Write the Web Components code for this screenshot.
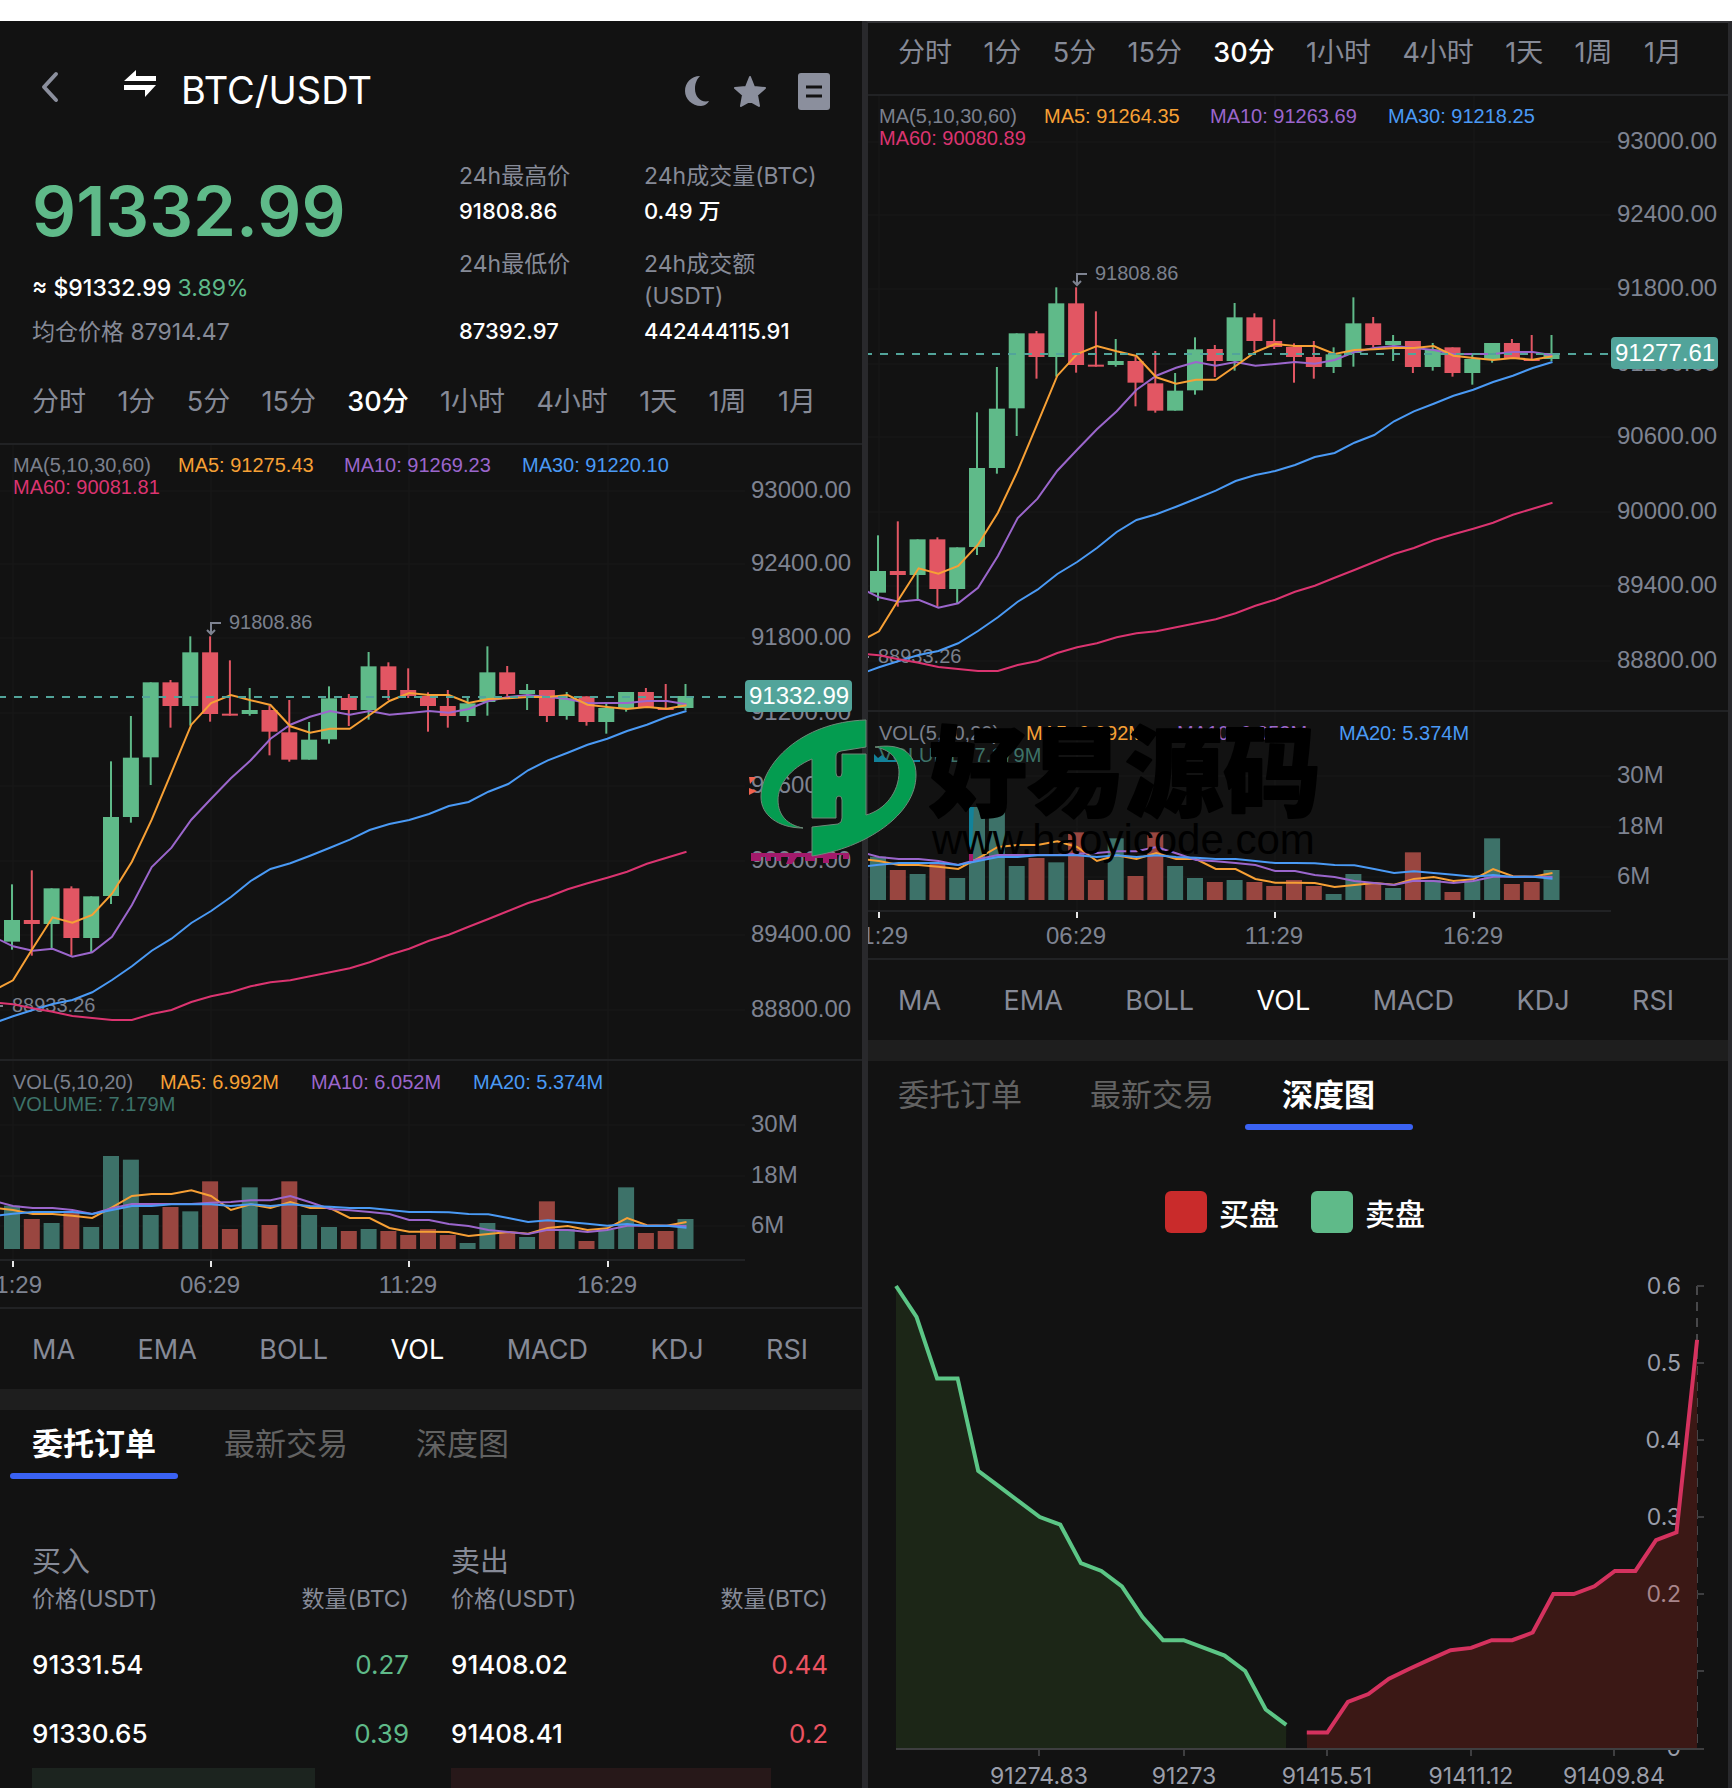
<!DOCTYPE html>
<html lang="zh-CN">
<head>
<meta charset="utf-8">
<meta name="viewport" content="width=device-width, initial-scale=1">
<title>BTC/USDT</title>
<style>
  body {
    margin: 0;
    background: #ffffff;
    font-family: Inter, 'Noto Sans CJK SC', sans-serif;
  }
</style>
</head>
<body>
<trade-board>
  <market-panel side="left">
    <pair-header pair="BTC/USDT"></pair-header>
    <ticker-summary></ticker-summary>
    <option-bar kind="interval" active="30分" items="分时,1分,5分,15分,30分,1小时,4小时,1天,1周,1月"></option-bar>
    <kline-chart price="91332.99" ma="91275.43,91269.23,91220.10,90081.81"></kline-chart>
    <option-bar kind="indicator" active="VOL" items="MA,EMA,BOLL,VOL,MACD,KDJ,RSI"></option-bar>
    <section-tabs active="0"></section-tabs>
    <order-book></order-book>
  </market-panel>
  <market-panel side="right">
    <option-bar kind="interval" active="30分" items="分时,1分,5分,15分,30分,1小时,4小时,1天,1周,1月"></option-bar>
    <kline-chart price="91277.61" ma="91264.35,91263.69,91218.25,90080.89"></kline-chart>
    <option-bar kind="indicator" active="VOL" items="MA,EMA,BOLL,VOL,MACD,KDJ,RSI"></option-bar>
    <section-tabs active="2"></section-tabs>
    <depth-chart></depth-chart>
  </market-panel>
  <brand-mark slot="mark"></brand-mark>
</trade-board>

<script>
const GREEN = '#5fba89';
const RED = '#e25663';
const MUTED = '#868a97';

// Attach an open root and fill it
function mount(el, html) {
  el.attachShadow({ mode: 'open' }).innerHTML = html;
}

// --- Board: two panels side by side ---
class TradeBoard extends HTMLElement {
  constructor() {
    super();
    mount(this, `
      <style>
        :host { display: block; position: relative; padding-top: 21px; overflow: hidden; }
        main { display: grid; grid-template-columns: 1fr 1fr; }
      </style>
      <main><slot></slot></main>
      <slot name="mark"></slot>`);
  }
}
customElements.define('trade-board', TradeBoard);

class MarketPanel extends HTMLElement {
  constructor() {
    super();
    mount(this, `
      <style>
        :host {
          --pad-start: 32px;
          --bar-top: 33px;
          display: flex;
          flex-direction: column;
          min-width: 0;
          background: #121212;
          border-right: 4px solid #29292c;
        }
        :host([side="right"]) {
          --pad-start: 30px;
          --bar-top: 11px;
          border-left: 2px solid #29292c;
          border-top: 2px solid #333336;
        }
      </style>
      <slot></slot>`);
  }
}
customElements.define('market-panel', MarketPanel);

// --- Header ---
class PairHeader extends HTMLElement {
  connectedCallback() {
    mount(this, `
      <style>
        :host { display: block; }
        header { display: flex; align-items: center; height: 138px; padding: 0 32px 0 34px; }
        button { border: 0; padding: 0; background: none; color: #8b8f9d; cursor: pointer; }
        svg { display: block; }
        .back { margin-right: 58px; }
        .swap { margin-right: 25px; color: #fff; }
        h1 { flex: 1; margin: 0; font-size: 38px; line-height: 44px; font-weight: 400; color: #fff; }
        .star { margin: 0 32px 0 21px; }
      </style>
      <header>
        <button class="back" aria-label="返回">
          <svg width="32" height="44" viewBox="0 0 32 44" fill="none" stroke="currentColor" stroke-width="4" stroke-linecap="round" stroke-linejoin="round"><path d="M22 6 10 19l12 13"/></svg>
        </button>
        <button class="swap" aria-label="切换交易对">
          <svg width="32" height="44" viewBox="0 0 32 44" fill="currentColor"><path d="M0 13 12 2v6h20v5zM0 17h32L21 29v-7H0z"/></svg>
        </button>
        <h1>${this.getAttribute('pair')}</h1>
        <button aria-label="夜间模式">
          <svg width="32" height="40" viewBox="0 0 32 40" fill="currentColor"><path d="M19 6C10 6 4 13 4 21s7 15 16 15c4 0 7-3 8-5-8 2-14-4-14-12 0-6 2-10 5-13z"/></svg>
        </button>
        <button class="star" aria-label="收藏">
          <svg width="32" height="40" viewBox="0 0 32 40" fill="currentColor" stroke="currentColor" stroke-width="2" stroke-linejoin="round"><path d="m16 7 4 10 11 1-8 7 2 11-9-5-9 5 2-11-8-7 11-1z"/></svg>
        </button>
        <button aria-label="订单">
          <svg width="32" height="42" viewBox="0 -4 32 42"><rect width="32" height="37" rx="3" fill="currentColor"/><path d="M8 14h16M8 23h16" stroke="#121212" stroke-width="3"/></svg>
        </button>
      </header>`);
  }
}
customElements.define('pair-header', PairHeader);

// --- Last price and 24h figures ---
class TickerSummary extends HTMLElement {
  constructor() {
    super();
    mount(this, `
      <style>
        :host {
          display: grid;
          grid-template-columns: 427px 1fr;
          padding-left: 32px;
          font-size: 23px;
          line-height: 32px;
          color: ${MUTED};
        }
        .last { font-size: 69px; line-height: 84px; font-weight: 600; color: ${GREEN}; padding-top: 10px; }
        .usd { margin-top: 19px; color: #fff; }
        .usd b { font-weight: 500; }
        .usd span { color: ${GREEN}; }
        .avg { margin-top: 12px; }
        dl { display: grid; grid-template-columns: 185px 1fr; row-gap: 18px; margin: 1px 0 0; }
        dl div { display: flex; flex-direction: column; justify-content: space-between; }
        dd { margin: 0; font-size: 22px; line-height: 38px; color: #fff; font-weight: 500; }
      </style>
      <div>
        <div class="last">91332.99</div>
        <div class="usd"><b>≈ $91332.99</b> <span>3.89%</span></div>
        <div class="avg">均仓价格 87914.47</div>
      </div>
      <dl>
        <div><dt>24h最高价</dt><dd>91808.86</dd></div>
        <div><dt>24h成交量(BTC)</dt><dd>0.49 万</dd></div>
        <div><dt>24h最低价</dt><dd>87392.97</dd></div>
        <div><dt>24h成交额<br>(USDT)</dt><dd>442444115.91</dd></div>
      </dl>`);
  }
}
customElements.define('ticker-summary', TickerSummary);

// --- Row of text options, used for intervals and indicators ---
class OptionBar extends HTMLElement {
  connectedCallback() {
    const active = this.getAttribute('active');
    const buttons = this.getAttribute('items').split(',').map(name =>
      `<button aria-pressed="${name === active}">${name}</button>`).join('');
    mount(this, `
      <style>
        :host { display: block; }
        nav { display: flex; justify-content: space-between; padding: var(--bar-top) 46px 22px var(--pad-start); }
        button {
          border: 0;
          padding: 0;
          background: none;
          font: 400 27px/38px Inter, 'Noto Sans CJK SC', sans-serif;
          color: ${MUTED};
          white-space: nowrap;
          cursor: pointer;
        }
        button[aria-pressed="true"] { color: #fff; font-weight: 500; }
        :host([kind="indicator"]) nav { padding: 22px 54px 20px var(--pad-start); border-bottom: 21px solid #1e1e1e; }
        :host([kind="indicator"]) button { font-weight: 400; }
      </style>
      <nav>${buttons}</nav>`);
  }
}
customElements.define('option-bar', OptionBar);

// --- Candles, moving averages and volume ---
// Rows: rising, high, low, body top, body bottom (thirds of a unit below PANE_Y)
const CANDLES = [
  [1, 826, 1022, 933, 998], [0, 784, 1040, 933, 945], [1, 838, 1018, 838, 945], [0, 832, 1040, 838, 987],
  [1, 862, 1030, 862, 987], [1, 457, 885, 624, 861], [1, 321, 641, 446, 624], [1, 220, 528, 220, 445],
  [0, 213, 356, 220, 291], [1, 82, 350, 130, 291], [0, 82, 338, 130, 315], [0, 154, 320, 314, 320],
  [1, 237, 320, 303, 315], [0, 290, 439, 303, 368], [0, 273, 458, 370, 452], [1, 339, 452, 392, 452],
  [1, 232, 404, 268, 391], [0, 255, 351, 267, 303], [1, 129, 332, 172, 303], [0, 160, 273, 172, 243],
  [0, 178, 267, 243, 261], [0, 250, 368, 261, 291], [0, 243, 356, 291, 321], [1, 262, 339, 283, 321],
  [1, 112, 320, 190, 279], [0, 171, 262, 190, 255], [1, 225, 303, 243, 255], [0, 243, 339, 243, 321],
  [1, 249, 332, 268, 321], [0, 262, 350, 262, 339], [1, 285, 374, 297, 339], [1, 249, 308, 249, 297],
  [0, 237, 297, 249, 297], [0, 225, 302, 297, 303], [1, 225, 303, 261, 297],
];
const PRICE_LINES = {
  '#9b66cc': [983, 1012, 1025, 1019, 1043, 1030, 983, 888, 774, 716, 632, 569, 508, 454, 389, 347, 323, 306, 317, 306, 317, 312, 306, 311, 300, 276, 264, 258, 264, 270, 283, 282, 282, 276, 276, 286],
  '#f7a035': [1145, 1114, 1018, 925, 941, 918, 854, 758, 632, 490, 347, 282, 258, 274, 288, 352, 371, 359, 359, 318, 276, 252, 258, 258, 282, 270, 268, 264, 264, 258, 287, 294, 300, 294, 299, 289],
  '#4a9af5': [1243, 1222, 1203, 1185, 1173, 1150, 1113, 1072, 1025, 989, 942, 906, 864, 816, 780, 763, 740, 716, 692, 663, 645, 633, 615, 591, 579, 548, 525, 484, 454, 431, 407, 389, 366, 347, 324, 306],
  '#db3470': [1180, 1186, 1198, 1208, 1221, 1227, 1233, 1233, 1215, 1203, 1179, 1162, 1150, 1132, 1120, 1114, 1102, 1090, 1078, 1060, 1037, 1019, 995, 977, 953, 930, 906, 882, 864, 841, 823, 806, 788, 764, 746, 728],
};
const VOLUMES = [440, 480, 492, 462, 504, 291, 302, 468, 444, 457, 367, 510, 385, 498, 367, 468, 504, 516, 510, 516, 528, 510, 528, 552, 492, 522, 534, 427, 510, 546, 512, 385, 522, 516, 480];
const VOLUME_LINES = {
  '#f7a035': [446, 453, 465, 465, 470, 477, 445, 411, 405, 405, 394, 411, 453, 436, 447, 429, 447, 447, 477, 477, 507, 518, 518, 519, 531, 525, 519, 524, 507, 501, 513, 508, 477, 499, 500, 489],
  '#9b66cc': [425, 441, 447, 447, 453, 465, 448, 435, 435, 435, 435, 431, 429, 424, 424, 411, 430, 450, 454, 459, 465, 483, 483, 495, 501, 513, 519, 525, 512, 513, 519, 513, 500, 500, 500, 501],
  '#4a9af5': [471, 464, 459, 459, 459, 465, 453, 441, 441, 436, 436, 436, 441, 436, 441, 436, 441, 443, 447, 447, 453, 459, 459, 460, 465, 466, 477, 489, 484, 489, 494, 500, 495, 501, 500, 506],
};
const PANE_Y = 166;
const VOL_Y = 616;
const STEP = 19.81;
const X0 = 12;

function polylines(lines, top) {
  return Object.entries(lines).map(([color, values]) => {
    const pts = values.map((v, i) => `${(X0 + 1 + (i - 1) * STEP).toFixed(1)},${(top + v / 3).toFixed(1)}`).join(' ');
    return `<polyline points="${pts}" fill="none" stroke="${color}" stroke-width="2"/>`;
  }).join('');
}

class KlineChart extends HTMLElement {
  connectedCallback() {
    const price = this.getAttribute('price');
    const ma = this.getAttribute('ma').split(',');
    const right = this.parentElement.getAttribute('side') === 'right';
    const priceY = right ? 260 : 254;

    const candles = CANDLES.map(([up, high, low, top, bottom], i) => {
      if (right && i === 34) top = 279;
      const x = X0 + i * STEP;
      const y = v => PANE_Y + v / 3;
      return `<g fill="${up ? GREEN : RED}">
        <rect x="${(x - 1).toFixed(1)}" y="${y(high)}" width="2" height="${(low - high) / 3}"/>
        <rect x="${(x - 8).toFixed(1)}" y="${y(top)}" width="16" height="${Math.max(2, (bottom - top) / 3)}"/></g>`;
    }).join('');

    const bars = VOLUMES.map((v, i) =>
      `<rect x="${(X0 - 8 + i * STEP).toFixed(1)}" y="${VOL_Y + v / 3}" width="16" height="${(570 - v) / 3}" fill="${CANDLES[i][0] ? '#3d7269' : '#994640'}"/>`).join('');

    const scale = [['93000.00', 48], ['92400.00', 121], ['91800.00', 195], ['91200.00', 270], ['90600.00', 343],
      ['90000.00', 418], ['89400.00', 492], ['88800.00', 567], ['30M', 682], ['18M', 733], ['6M', 783]];
    const times = [['01:29', 13], ['06:29', 211], ['11:29', 409], ['16:29', 608]];

    mount(this, `
      <style>
        :host { display: block; }
        svg { display: block; width: 100%; height: auto; font-family: 'Liberation Sans', Arial, sans-serif; }
        .axis { font-size: 24px; fill: #7e8391; }
        .small { font-size: 20px; fill: #7b808d; }
        .tag { font-size: 24px; fill: #fff; }
      </style>
      <svg viewBox="${right ? '2 0 860' : '0 0 862'} 866" role="img" aria-label="K线图">
        <g stroke="#191919">
          ${scale.map(s => `<path d="M0 ${s[1]}H745"/>`).join('')}
          ${times.map(t => `<path d="M${t[1]} 0V816"/>`).join('')}
        </g>
        <path d="M0 1H866M0 617H866M0 817H745M0 865H866" stroke="#212224" stroke-width="2"/>
        <g class="axis">${scale.map(s => `<text x="751" y="${s[1] + 7}">${s[0]}</text>`).join('')}</g>
        ${candles}
        <path d="M211 190V180h10M207 187l4 4 4-4" fill="none" stroke="#7e8391" stroke-width="2"/>
        <text class="small" x="229" y="186">91808.86</text>
        <path d="M0 563h3" stroke="#7e8391" stroke-width="2"/>
        <text class="small" x="12" y="569">88933.26</text>
        ${polylines(PRICE_LINES, PANE_Y)}
        <path d="M0 ${priceY}H745" stroke="#52a49a" stroke-width="2" stroke-dasharray="8 8" stroke-dashoffset="2"/>
        <rect x="745" y="${priceY - 17}" width="107" height="32" rx="4" fill="#52a49a"/>
        <text class="tag" x="749" y="${priceY + 7}">${price}</text>
        <g class="small">
          <text x="13" y="29">MA(5,10,30,60)</text>
          <text x="178" y="29" fill="#f7a035">MA5: ${ma[0]}</text>
          <text x="344" y="29" fill="#9b66cc">MA10: ${ma[1]}</text>
          <text x="522" y="29" fill="#4a9af5">MA30: ${ma[2]}</text>
          <text x="13" y="51" fill="#db3470">MA60: ${ma[3]}</text>
          <text x="13" y="646">VOL(5,10,20)</text>
          <text x="160" y="646" fill="#f7a035">MA5: 6.992M</text>
          <text x="311" y="646" fill="#9b66cc">MA10: 6.052M</text>
          <text x="473" y="646" fill="#4a9af5">MA20: 5.374M</text>
          <text x="13" y="668" fill="#3d7269">VOLUME: 7.179M</text>
        </g>
        ${bars}
        ${polylines(VOLUME_LINES, VOL_Y)}
        ${times.map(t => `<path d="M${t[1]} 818v6" stroke="#e6e6e6" stroke-width="2"/>`).join('')}
        <g class="axis" text-anchor="middle">${times.map(t => `<text x="${t[1] - 1}" y="850">${t[0]}</text>`).join('')}</g>
      </svg>`);
  }
}
customElements.define('kline-chart', KlineChart);

// --- Section tabs ---
class SectionTabs extends HTMLElement {
  connectedCallback() {
    const active = Number(this.getAttribute('active'));
    const tabs = ['委托订单', '最新交易', '深度图'].map((name, i) =>
      `<button role="tab" aria-selected="${i === active}">${name}</button>`).join('');
    mount(this, `
      <style>
        :host { display: block; }
        div { display: flex; gap: 68px; padding: 9px var(--pad-start) 0; }
        button {
          position: relative;
          border: 0;
          padding: 0 0 14px;
          background: none;
          font: 400 31px/46px 'Noto Sans CJK SC', sans-serif;
          color: #626262;
          cursor: pointer;
        }
        button[aria-selected="true"] { color: #fff; font-weight: 700; }
        button[aria-selected="true"]::after {
          content: '';
          position: absolute;
          left: 50%;
          bottom: 0;
          width: 168px;
          height: 6px;
          margin-left: -84px;
          border-radius: 3px;
          background: #3a62f3;
        }
      </style>
      <div role="tablist">${tabs}</div>`);
  }
}
customElements.define('section-tabs', SectionTabs);

// --- Order book ---
class OrderBook extends HTMLElement {
  constructor() {
    super();
    const side = (cls, title, rows) => `
      <table class="${cls}">
        <caption>${title}</caption>
        <thead><tr><th>价格(USDT)</th><th>数量(BTC)</th></tr></thead>
        <tbody>${rows.map(r => `<tr><td>${r[0]}</td><td>${r[1]}</td></tr>`).join('')}</tbody>
        <tfoot><tr><td colspan="2"></td></tr></tfoot>
      </table>`;
    mount(this, `
      <style>
        :host { display: grid; grid-template-columns: 1fr 1fr; gap: 42px; padding: 63px 34px 0 32px; }
        table { width: 100%; border-collapse: collapse; color: #fff; }
        caption { text-align: left; font-size: 29px; line-height: 40px; color: ${MUTED}; }
        th { padding: 0 0 14px; font-size: 23px; line-height: 34px; font-weight: 400; color: ${MUTED}; text-align: left; }
        td { padding: 0; height: 69px; font-size: 26px; line-height: 36px; font-weight: 500; }
        th:last-child, td:last-child { text-align: right; }
        td:last-child { font-weight: 400; }
        .buy td:last-child { color: ${GREEN}; }
        .sell td:last-child { color: #ea5361; }
        tfoot td { height: 20px; }
        .buy tfoot td { background: linear-gradient(90deg, #1c241f 75%, transparent 75%); }
        .sell tfoot td { background: linear-gradient(90deg, #271819 85%, transparent 85%); }
      </style>
      ${side('buy', '买入', [['91331.54', '0.27'], ['91330.65', '0.39']])}
      ${side('sell', '卖出', [['91408.02', '0.44'], ['91408.41', '0.2']])}`);
  }
}
customElements.define('order-book', OrderBook);

// --- Depth chart ---
const BIDS = [.6, .56, .48, .48, .36, .34, .32, .3, .29, .24, .23, .21, .17, .14, .14, .13, .12, .1, .05, .03];
const ASKS = [.02, .02, .06, .07, .09, .103, .115, .127, .13, .14, .14, .15, .2, .2, .21, .23, .23, .27, .28, .53];

class DepthChart extends HTMLElement {
  constructor() {
    super();
    const base = 482;
    const pts = (values, from) => values.map((v, i) => `${(30 + (from + i) * 20.54).toFixed(1)},${(base - v * 770).toFixed(1)}`);
    const bids = pts(BIDS, 0);
    const asks = pts(ASKS, 20);
    const marks = [[173, '91274.83'], [318, '91273'], [461, '91415.51'], [605, '91411.12'], [748, '91409.84']];
    mount(this, `
      <style>
        :host { display: block; padding-top: 61px; }
        ul {
          display: flex;
          justify-content: center;
          gap: 32px;
          margin: 0 6px 33px 0;
          padding: 0;
          list-style: none;
          font: 500 30px/42px 'Noto Sans CJK SC', sans-serif;
          color: #fff;
        }
        li { display: flex; gap: 12px; }
        li::before { content: ''; width: 42px; height: 42px; border-radius: 6px; background: #c92b2b; }
        li + li::before { background: ${GREEN}; }
        svg { display: block; width: 100%; height: auto; font-family: Inter, sans-serif; font-size: 23px; fill: #9a9eaa; }
      </style>
      <ul><li>买盘</li><li>卖盘</li></ul>
      <svg viewBox="2 0 860 522" role="img" aria-label="深度图">
        <path d="M831 20V482" stroke="#48484a" stroke-width="2" stroke-dasharray="9 7"/>
        <g text-anchor="end">
          ${[['0.6', 20], ['0.5', 97], ['0.4', 174], ['0.3', 251], ['0', 482]].map(l => `<text x="815" y="${l[1] + 8}">${l[0]}</text>`).join('')}
        </g>
        <polygon points="30,${base} ${bids.join(' ')} 420,${base}" fill="#1c2617"/>
        <polygon points="441,${base} ${asks.join(' ')} 831,${base}" fill="#3b1815"/>
        <text x="815" y="336" text-anchor="end" fill="#a7848a">0.2</text>
        <polyline points="${bids.join(' ')}" fill="none" stroke="#5cc686" stroke-width="4"/>
        <polyline points="${asks.join(' ')}" fill="none" stroke="#d5325f" stroke-width="4"/>
        <g stroke="#3e3e40" stroke-width="2">
          <path d="M30 483H838"/>
          ${[0, 1, 2, 3, 4, 5].map(i => `<path d="M831 ${20 + i * 77}h7"/>`).join('')}
          ${marks.map(m => `<path d="M${m[0]} 483v7"/>`).join('')}
        </g>
        <g text-anchor="middle">${marks.map(m => `<text x="${m[0]}" y="518">${m[1]}</text>`).join('')}</g>
      </svg>`);
  }
}
customElements.define('depth-chart', DepthChart);

// --- Site mark laid over the board ---
class BrandMark extends HTMLElement {
  constructor() {
    super();
    mount(this, `
      <style>
        :host {
          position: absolute;
          top: 716px;
          left: calc(50% - 118px);
          pointer-events: none;
        }
        svg { display: block; }
      </style>
      <svg width="580" height="150" viewBox="748 716 580 150">
        <path d="M749 777l7 0-6 7zM749 788l8 3-8 4z" fill="#f0624e"/>
        <path d="M751 853h98v6h-6v-4h-6v4h-8v4h-6v-5h-8v3h-10v-4h-8l-5 7h-6l3-7h-8v4h-5v-4h-5v4h-5v-4h-5v4h-10z" fill="#a31a6c"/>
        <path d="M874 762v-8l4 4 4-3 6 5h32v2zM969 807h5l-2 40h-3z" fill="#12829a"/>
        <path d="M969 850l4-3v14h-4z" fill="#a31a6c"/>
        <path fill="#049c50" stroke="#6e8a79" d="M866 720V747L841 751Q836 752 836 756V773Q836 777 839 777Q842 777 842 773V754H866V815C885 810 899 792 899 772C899 757 888 749 875 747C900 743 916 752 916 775C916 815 865 848 812 856V827L838 824Q842 823 842 818V800Q842 796 839 796Q836 796 836 800V818H812V759C790 768 778 785 778 800C778 816 788 825 803 828C778 828 761 815 761 797C761 765 800 722 866 720Z"/>
        <text x="929" y="808" font-family="'Noto Sans CJK SC', sans-serif" font-size="98" font-weight="900" stroke="#000" stroke-width="2" stroke-linejoin="round">好易源码</text>
        <text x="932" y="854" font-family="'Liberation Sans', Arial, sans-serif" font-size="42">www.haoyicode.com</text>
      </svg>`);
  }
}
customElements.define('brand-mark', BrandMark);
</script>
</body>
</html>
